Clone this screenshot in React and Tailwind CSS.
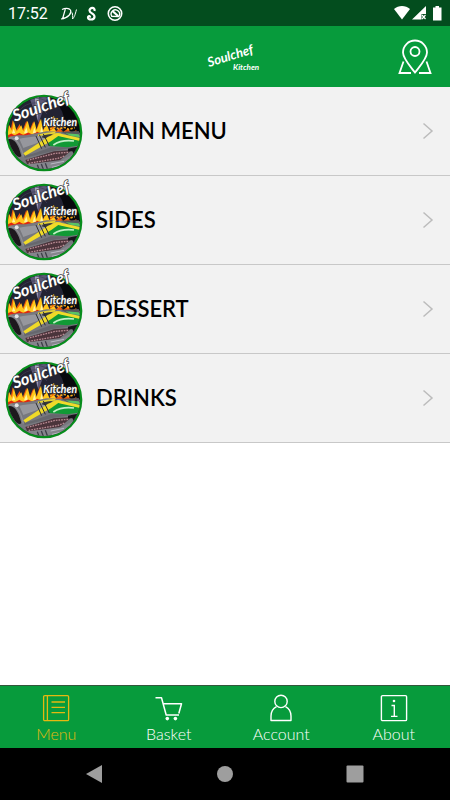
import { useState, useId } from 'react';

const menuItems = [
  { id: 'main', label: 'MAIN MENU' },
  { id: 'sides', label: 'SIDES' },
  { id: 'dessert', label: 'DESSERT' },
  { id: 'drinks', label: 'DRINKS' },
];

const MenuIcon = () => (
  <svg viewBox="0 0 28 28" className="w-7 h-7" fill="none" stroke="currentColor" strokeWidth="1.3" aria-hidden="true">
    <rect x="1.6" y="1.6" width="25" height="25" rx="1.2" />
    <path d="M5.4 1.6v25M9.5 8h13.5M9.5 13.3h13.5M9.5 18.6h13.5" />
  </svg>
);

const BasketIcon = () => (
  <svg viewBox="0 0 28 28" className="w-7 h-7" fill="none" stroke="currentColor" strokeWidth="1.5" strokeLinejoin="round" aria-hidden="true">
    <path d="M.5 3.7h6l4.7 17.3h12.8M8 9.7h18.5L23.8 19.5" />
    <circle cx="12.3" cy="24.6" r="1.8" fill="currentColor" stroke="none" />
    <circle cx="20.4" cy="24.6" r="1.8" fill="currentColor" stroke="none" />
  </svg>
);

const AccountIcon = () => (
  <svg viewBox="0 0 28 28" className="w-7 h-7" fill="none" stroke="currentColor" strokeWidth="1.4" strokeLinejoin="round" aria-hidden="true">
    <circle cx="14" cy="7.4" r="6.2" />
    <path d="M9.5 12.6C5.8 14.6 4 17.7 4 22v4.5h20V22c0-4.3-1.8-7.4-5.5-9.4" />
  </svg>
);

const AboutIcon = () => (
  <svg viewBox="0 0 28 28" className="w-7 h-7" fill="none" stroke="currentColor" strokeWidth="1.4" aria-hidden="true">
    <rect x="1.4" y="1.6" width="25.2" height="25" rx="1.2" />
    <path d="M11.5 11.5h2.8v10.9M11 22.4h6.5" />
    <circle cx="14" cy="7" r="1.3" fill="currentColor" stroke="none" />
  </svg>
);

const tabs = [
  { icon: MenuIcon, label: 'Menu', id: 'menu' },
  { icon: BasketIcon, label: 'Basket', id: 'basket' },
  { icon: AccountIcon, label: 'Account', id: 'account' },
  { icon: AboutIcon, label: 'About', id: 'about' },
];

const StatusBar = () => (
  <div className="h-[26px] bg-[#034d1e] text-white flex items-center justify-between px-2">
    <div className="flex items-center pt-0.5">
      <span className="font-[Roboto,sans-serif] text-base leading-none">17:52</span>
      <svg viewBox="0 0 68 20" className="w-[68px] h-5 ml-3" fill="none" stroke="currentColor" aria-hidden="true">
        <path d="M2 5.500c3-1.500 7-1.500 8.500.5 1.500 3-2 8-9.500 9M5.500 4.500 2.500 15" strokeWidth="1.2" />
        <path d="M12 8.500c.8 2 .8 4 .5 6.500 2-2 2.500-4 4-9.500" strokeWidth="1" />
        <path d="M34.500 7c1-4-5-4-5-.500 0 3 5.500 3 5 6.500-.5 3.500-6.500 3-6.500.5 0-2 2.500-1.500 2 0" strokeWidth="2.200" />
        <circle cx="55" cy="9.500" r="6.700" strokeWidth="1.6" />
        <path d="M51.800 12.300a4.200 4.200 0 1 1 7 .200z" strokeWidth="1.4" />
        <path d="m52.500 7 5.500 5" strokeWidth="2.200" />
      </svg>
    </div>
    <svg viewBox="0 0 50 18" className="w-[50px] h-[18px]" fill="currentColor" aria-hidden="true">
      <path d="M2 5C6.500 1 13.500 1 18 5L10 15.500z" />
      <path d="M34 2V10H29.500v5.500h-9.500z" />
      <path d="m30 11 3.500 4m0-4-3.500 4" stroke="currentColor" strokeWidth="1.2" />
      <path d="M41 3.500h2.500V2h3.500v1.500h2.500v13H41z" />
    </svg>
  </div>
);

const HeaderLogo = () => (
  <svg viewBox="0 0 56 34" className="w-14 h-[34px]" fill="white" role="img" aria-label="Soulchef Kitchen">
    <g fontFamily="Lato, cursive" fontStyle="italic" fontWeight="700">
      <text x="4" y="27" fontSize="13" transform="rotate(-17 4 27)">Soulchef</text>
      <text x="28" y="30" fontSize="8">Kitchen</text>
    </g>
  </svg>
);

const DishLogo = () => {
  const clip = useId();
  return (
    <svg viewBox="0 3 270 264" className="w-[90px] h-[88px] shrink-0" role="img" aria-label="Soulchef Kitchen">
      <defs>
        <clipPath id={clip}>
          <circle cx="132" cy="141" r="108" />
        </clipPath>
      </defs>
      <circle cx="132" cy="141" r="115" fill="#078c1c" />
      <g clipPath={`url(#${clip})`}>
        <rect width="270" height="276" fill="#08090d" />
        {/* record behind the lettering */}
        <circle cx="105" cy="110" r="88" fill="#232333" />
        <path d="M84 24h62l-30 86z" fill="#5b5877" />
        <path d="M103 24h14l-4 80z" fill="#aaa5c4" />
        <path d="M50 62a72 72 0 0 1 110 0M60 72a58 58 0 0 1 90 0M69 84a44 44 0 0 1 72 0" fill="none" stroke="#3f4055" strokeWidth="2" />
        {/* flames */}
        <path d="M15 158l8-46 9 20 6-30 9 32 12-20 8 22 12-32 9 30 12-28 8 28 12-34 8 36 11-24 8 24 12-16 9 16 12-10 9 12 14-10 12 12 14-8v40z" fill="#ef5a0b" />
        <path d="M22 148l5-32 9 18 5-30 9 32 14-18 6 18 13-32 8 30 12-28 7 26 13-34 6 36 11-20 8 22 14-10 8 14z" fill="#ffc91c" />
        <path d="M36 142l5-14 5 14zM72 142l7-18 5 18zM98 142l5-18 6 18zM120 142l5-22 5 22z" fill="#fff3a0" />
        <path d="M22 152l12-6 10 6 14-8 12 7 14-8 14 6 14-8 14 7" fill="none" stroke="#e0260f" strokeWidth="6" />
        <path d="m161 89 5 9 9-2-5 8 6 8-10-1-6 9-2-11-10-3 9-5z" fill="#ffc41f" />
        <path d="M150 128l16-5 10 6 16-5 14 6 18-5" fill="none" stroke="#f5a81a" strokeWidth="5" strokeDasharray="7 4" />
        {/* grill drum */}
        <path d="M22 156c16-9 36-9 56-8l62-12 100 4 10 64-30 60H60z" fill="#77787e" />
        <path d="M58 158c30-6 64-6 92-14l-8 14c-26 12-52 20-72 28z" fill="#96979d" />
        <path d="M72 208c24-2 50-12 80-24l80 0-70 10-88 22z" fill="#66676d" />
        <path d="M24 160c14-4 30 8 40 50-4 6-12 4-20-8-10-14-16-26-20-42z" fill="#1d181d" />
        <path d="M24 158c18-10 38 14 46 54" fill="none" stroke="#8f8f94" strokeWidth="4" />
        {/* flag colours across the lid */}
        <path d="M132 146l32-6-22 18-18-4z" fill="#36383b" />
        <path d="M144 164l32-20 64 12 4 22-42 6-56-4z" fill="#119a35" />
        <path d="M182 137l54-2 8 20-42-8z" fill="#55565b" />
        <path d="M196 142l40 3 6 9-28-4z" fill="#58c465" />
        <path d="m150 143 26-1 70 15v9l-68-15z" fill="#f0dc2a" />
        <path d="m70 202 74-50 26-10 14 1-30 22-78 44z" fill="#f0da28" />
        <path d="M114 148c16-3 34-6 52-8" fill="none" stroke="#e8d431" strokeWidth="5" />
        <path d="M160 177c16-11 38-15 62-12" fill="none" stroke="#c4f0c8" strokeWidth="5" />
        <path d="m108 150 17 38m-7-42 18 38m-6-40 18 36" fill="none" stroke="#2c2d31" strokeWidth="3" />
        {/* coal tray */}
        <path d="m76 222 86-26 54-4-36 30-98 14z" fill="#4b343b" />
        <path d="m82 223 84-21 40-3M86 232l88-15 20-7" fill="none" stroke="#b98a93" strokeWidth="4" strokeDasharray="5 3" />
        <path d="m204 188 40-8-5 22-16 4-6-10-13 0z" fill="#17151b" />
        <path d="M70 236l112-12 38-20-20 60H90z" fill="#85858c" />
        <path d="m112 236 8 22m4-24 9 24m3-26 9 24" fill="none" stroke="#3e3e48" strokeWidth="4" />
        <path d="M152 234l40-8M156 244l30-7" fill="none" stroke="#b9b9c4" strokeWidth="3" />
        <circle cx="50" cy="157" r="6" fill="#fff" opacity="0.8" />
      </g>
      <g fontFamily="Lato, cursive" fontStyle="italic" fontWeight="700" fill="#fff" stroke="#303033" strokeWidth="4" paintOrder="stroke">
        <text x="44" y="107" fontSize="49" transform="rotate(-19 44 107)">Soulchef</text>
        <text x="130" y="119" fontSize="31">Kitchen</text>
      </g>
    </svg>
  );
};

const Header = () => (
  <header className="h-[61px] bg-[#079b3c] grid grid-cols-[1fr_auto_1fr] items-center px-4">
    <span />
    <div className="flex justify-center pl-4">
      <HeaderLogo />
    </div>
    <button aria-label="Find us" className="justify-self-end text-white">
      <svg viewBox="0 0 38 38" className="w-[38px] h-[38px]" fill="none" stroke="currentColor" strokeWidth="1.8" aria-hidden="true">
        <path d="M19 34.5C14 28 7 20.5 7 14.5a12 12 0 0 1 24 0C31 20.5 24 28 19 34.5z" />
        <circle cx="19" cy="13.5" r="4.5" />
        <path d="M7.5 23.5 3.5 35H15M30.5 23.5 34.5 35H23" />
      </svg>
    </button>
  </header>
);

const App = () => {
  const [activeTab, setActiveTab] = useState('menu');

  return (
    <div className="min-h-screen bg-white flex flex-col font-[Lato,sans-serif]">
      <StatusBar />
      <Header />

      <main className="flex-1">
        <ul>
          {menuItems.map((item) => (
            <li key={item.id} className="border-b border-[#c8c8c8]">
              <button className="w-full flex items-center bg-[#f2f2f2] text-left pr-4">
                <DishLogo />
                <span className="flex-1 pl-1.5 text-[22px] leading-7 font-semibold text-black">{item.label}</span>
                <svg viewBox="0 0 12 18" className="w-3 h-[18px]" fill="none" stroke="#bcbcbc" strokeWidth="1.5" aria-hidden="true">
                  <path d="m1.5 1.5 8.5 7.5-8.5 7.5" />
                </svg>
              </button>
            </li>
          ))}
        </ul>
      </main>

      {/* Tab Bar */}
      <nav className="h-[63px] bg-[#079b3c] border-t border-[#34563c] grid grid-cols-4">
        {tabs.map((tab) => (
          <button
            key={tab.id}
            onClick={() => setActiveTab(tab.id)}
            className={`flex flex-col items-center pt-2 ${activeTab === tab.id ? 'text-[#e5b910]' : 'text-white'}`}
          >
            <tab.icon />
            <span className="text-base leading-6 font-light">{tab.label}</span>
          </button>
        ))}
      </nav>

      {/* System Navigation */}
      <div className="h-[52px] bg-black text-[#9e9e9e] flex items-center justify-center gap-[110px]">
        <button aria-label="Back">
          <svg viewBox="0 0 20 20" className="w-5 h-5" fill="currentColor"><path d="M17 1v18L1 10z" /></svg>
        </button>
        <button aria-label="Home">
          <svg viewBox="0 0 20 20" className="w-5 h-5" fill="currentColor"><circle cx="10" cy="10" r="8" /></svg>
        </button>
        <button aria-label="Recent apps">
          <svg viewBox="0 0 20 20" className="w-5 h-5" fill="currentColor"><rect x="1.5" y="1.5" width="17" height="17" rx="1" /></svg>
        </button>
      </div>
    </div>
  );
};

export default App;
